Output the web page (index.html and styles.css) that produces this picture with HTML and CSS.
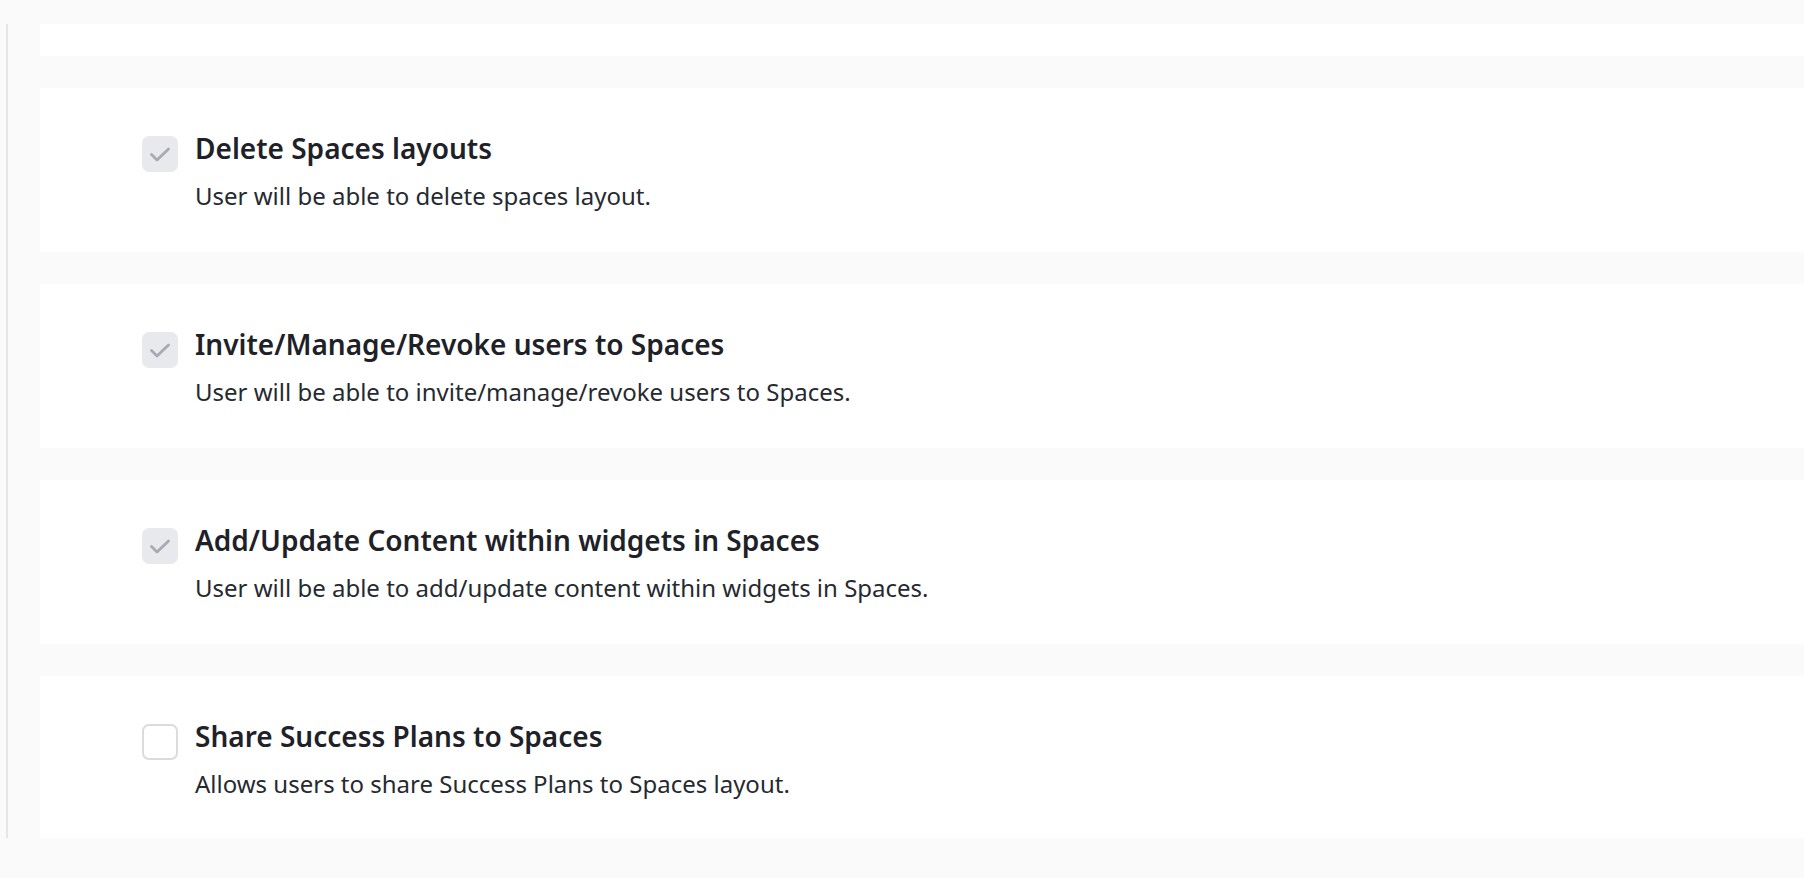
FILE: index.html
```html
<!DOCTYPE html>
<html lang="en">
<head>
<meta charset="utf-8">
<title>Spaces permissions</title>
<link rel="stylesheet" href="styles.css">
</head>
<body>
<div class="page">
  <div class="panel">
    <div class="card card-partial"></div>
    <div class="card">
      <span class="check checked"><svg viewBox="0 0 36 36" width="36" height="36"><path d="M9.5 18.5l5.5 5.5 11.5-11" fill="none" stroke="#a7aab1" stroke-width="2.8" stroke-linecap="round" stroke-linejoin="round"/></svg></span>
      <div class="text">
        <div class="title">Delete Spaces layouts</div>
        <div class="desc">User will be able to delete spaces layout.</div>
      </div>
    </div>
    <div class="card">
      <span class="check checked"><svg viewBox="0 0 36 36" width="36" height="36"><path d="M9.5 18.5l5.5 5.5 11.5-11" fill="none" stroke="#a7aab1" stroke-width="2.8" stroke-linecap="round" stroke-linejoin="round"/></svg></span>
      <div class="text">
        <div class="title">Invite/Manage/Revoke users to Spaces</div>
        <div class="desc">User will be able to invite/manage/revoke users to Spaces.</div>
      </div>
    </div>
    <div class="card">
      <span class="check checked"><svg viewBox="0 0 36 36" width="36" height="36"><path d="M9.5 18.5l5.5 5.5 11.5-11" fill="none" stroke="#a7aab1" stroke-width="2.8" stroke-linecap="round" stroke-linejoin="round"/></svg></span>
      <div class="text">
        <div class="title">Add/Update Content within widgets in Spaces</div>
        <div class="desc">User will be able to add/update content within widgets in Spaces.</div>
      </div>
    </div>
    <div class="card card-last">
      <span class="check"></span>
      <div class="text">
        <div class="title">Share Success Plans to Spaces</div>
        <div class="desc">Allows users to share Success Plans to Spaces layout.</div>
      </div>
    </div>
  </div>
</div>
</body>
</html>
```

FILE: styles.css
```css
html, body {
  margin: 0;
  padding: 0;
  background: #fafafa;
  font-family: "Noto Sans", "Open Sans", sans-serif;
}
.page {
  padding: 24px 0 40px 0;
}
.panel {
  margin-left: 6px;
  border-left: 2px solid #e6e6e6;
  padding-left: 32px;
  display: flex;
  flex-direction: column;
  gap: 32px;
}
.card {
  background: #ffffff;
  height: 164px;
  box-sizing: border-box;
  padding: 48px 0 0 102px;
  display: flex;
  align-items: flex-start;
  gap: 17px;
}
.card-partial {
  height: 32px;
  padding: 0;
}
.card-last {
  height: 162px;
}
.check {
  flex: none;
  width: 36px;
  height: 36px;
  box-sizing: border-box;
  border-radius: 7px;
  border: 2px solid #dadbe0;
  background: #fff;
  display: block;
}
.check.checked {
  border: none;
  background: #e8e9ed;
}
.check svg {
  display: block;
}
.text {
  display: flex;
  flex-direction: column;
}
.title {
  font-size: 28px;
  font-weight: 600;
  color: #1e2228;
  line-height: 34px;
  margin-top: -5px;
}
.desc {
  font-size: 24px;
  color: #262a30;
  line-height: 32px;
  margin-top: 15px;
}
```
